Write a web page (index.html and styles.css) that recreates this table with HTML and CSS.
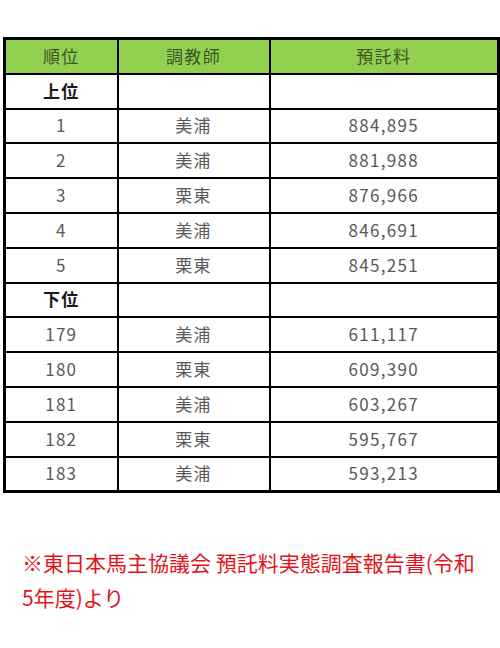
FILE: index.html
```html
<!DOCTYPE html>
<html lang="ja">
<head>
<meta charset="utf-8">
<link rel="stylesheet" href="styles.css">
</head>
<body>
<div class="page">
  <table class="fee-table">
    <colgroup>
      <col class="c1"><col class="c2"><col class="c3">
    </colgroup>
    <thead>
      <tr><th>順位</th><th>調教師</th><th>預託料</th></tr>
    </thead>
    <tbody>
      <tr class="section"><td>上位</td><td></td><td></td></tr>
      <tr><td>1</td><td>美浦</td><td>884,895</td></tr>
      <tr><td>2</td><td>美浦</td><td>881,988</td></tr>
      <tr><td>3</td><td>栗東</td><td>876,966</td></tr>
      <tr><td>4</td><td>美浦</td><td>846,691</td></tr>
      <tr><td>5</td><td>栗東</td><td>845,251</td></tr>
      <tr class="section"><td>下位</td><td></td><td></td></tr>
      <tr><td>179</td><td>美浦</td><td>611,117</td></tr>
      <tr><td>180</td><td>栗東</td><td>609,390</td></tr>
      <tr><td>181</td><td>美浦</td><td>603,267</td></tr>
      <tr><td>182</td><td>栗東</td><td>595,767</td></tr>
      <tr><td>183</td><td>美浦</td><td>593,213</td></tr>
    </tbody>
  </table>
  <p class="source">※東日本馬主協議会 預託料実態調査報告書(令和5年度)より</p>
</div>
</body>
</html>
```
FILE: styles.css
```css
html, body {
  margin: 0;
  padding: 0;
  background: #ffffff;
}
.page {
  padding: 37px 3px 0 3px;
}
.fee-table {
  width: 494px;
  border-collapse: collapse;
  table-layout: fixed;
  border: 3px solid #000;
  font-family: "Noto Sans CJK JP", "Noto Sans", sans-serif;
  font-size: 17px;
  letter-spacing: 1.3px;
  color: #595959;
}
.c1 { width: 113px; }
.c2 { width: 152px; }
.c3 { width: 229px; }
.fee-table th,
.fee-table td {
  border: 2px solid #000;
  height: 30.8px;
  padding: 0 0 2px 0;
  text-align: center;
  vertical-align: middle;
  line-height: 1;
}
.fee-table th {
  background: #92d050;
  color: #3d5426;
  font-weight: 400;
}
.section td {
  font-weight: 700;
  color: #1a1a1a;
}
.source {
  margin: 52px 0 0 19px;
  width: 462px;
  font-family: "Noto Sans CJK JP", "Noto Sans", sans-serif;
  font-size: 21px;
  line-height: 35px;
  color: #e2141c;
}
```
